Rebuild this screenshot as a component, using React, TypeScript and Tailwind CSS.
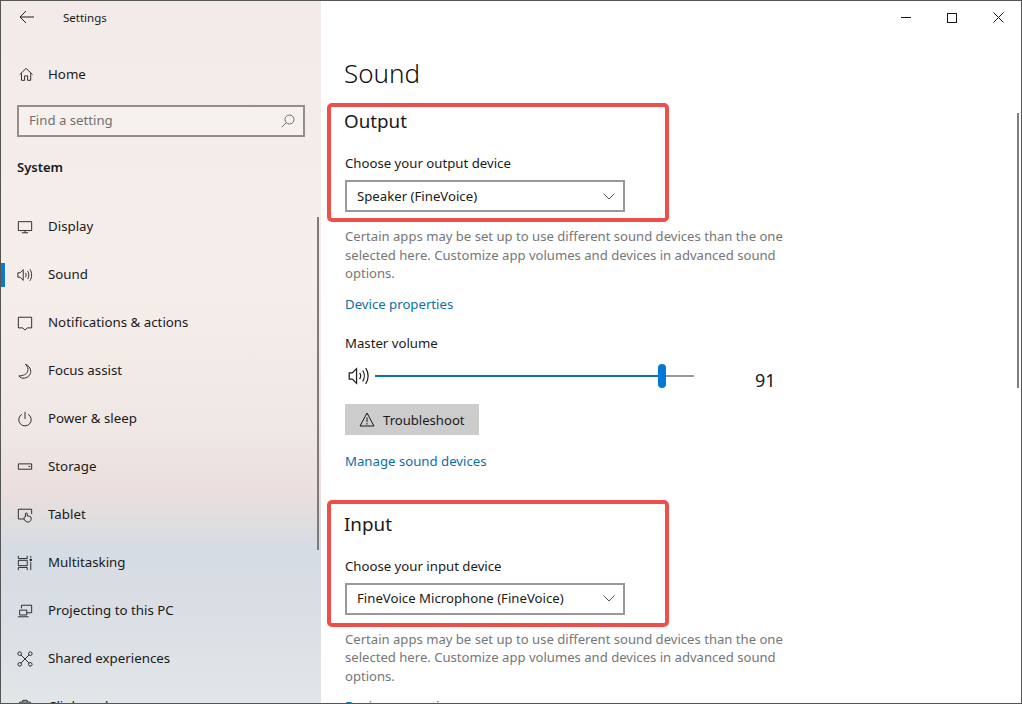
import type { ReactNode } from "react";

const ink = "#1a1a1a";

function Ico({ children, size = 18 }: { children: ReactNode; size?: number }) {
  return (
    <svg width={size} height={size} viewBox="0 0 18 18" fill="none" stroke={ink} strokeWidth="1" className="shrink-0">
      {children}
    </svg>
  );
}

const speaker = (
  <>
    <path d="M1 6.500h2.500L7 3v12l-3.500-3.500H1z" />
    <path d="M9.500 6.500c1 1.400 1 3.600 0 5M12 4.500c1.800 2.600 1.800 6.400 0 9M14.500 2.500c2.600 3.800 2.600 9.200 0 13" />
  </>
);

const navItems: { label: string; icon: ReactNode }[] = [
  { label: "Display", icon: <><path d="M1.500 3h15v10h-15z" /><path d="M9 13v2.500M5.500 15.500h7" /></> },
  { label: "Sound", icon: speaker },
  { label: "Notifications & actions", icon: <path d="M1.500 2.500h15v12h-5L9 17l-2.500-2.500h-5z" /> },
  { label: "Focus assist", icon: <path d="M9.500 1.500c2.500 2 3.500 5 2.500 8s-5 5-10 5c1.500 2 4 3 6.500 2.500 4-.5 7-4 7-7.500 0-3.500-2.500-7-6-8z" /> },
  { label: "Power & sleep", icon: <><path d="M5.500 3.700a7 7 0 1 0 7 0" /><path d="M9 1v8" /></> },
  { label: "Storage", icon: <><path d="M1.500 5.500h15v6h-15z" /><path d="M13 8.500h2" /></> },
  { label: "Tablet", icon: <><path d="M8 13.500H1.500v-11h15V8" /><path d="M9.500 16c-1-1-1.500-2-1.500-3.500s1-2 1.500-1.500V7.500c0-1.200 2-1.200 2 0V10l3 .5c1 .2 1.500 1 1.500 2 0 2-1 4.500-3.500 4.500-1.200 0-2-.2-2.500-1z" /></> },
  { label: "Multitasking", icon: <><path d="M1.500 1v3h10V1M1.500 17v-3h10v3M1.500 6h10v6h-10z" /><path d="M15.500 1v2M15.500 8v9" /><circle cx="15.500" cy="5.500" r="1" fill={ink} /></> },
  { label: "Projecting to this PC", icon: <><path d="M5 6V2.500h11.500V11H11" /><path d="M3 8h8v5.500H3zM1 15.500h12" /></> },
  { label: "Shared experiences", icon: <><circle cx="3" cy="3" r="2" /><circle cx="15" cy="3" r="2" /><circle cx="3" cy="15" r="2" /><circle cx="15" cy="15" r="2" /><path d="M4.500 4.500l9 9M13.500 4.500l-9 9" /></> },
  { label: "Clipboard", icon: <><path d="M3 3.500h12V17H3z" /><path d="M6.500 3.500V1.500h5v2" /></> },
];

function DeviceSelect({ value }: { value: string }) {
  return (
    <div className="mt-[7px] flex h-[32px] w-[280px] items-center justify-between border-2 border-[#999999] pl-[10px] pr-[8px] text-[13.2px] text-[#1a1a1a]">
      <span className="pt-[1px]">{value}</span>
      <svg width="12" height="7" viewBox="0 0 12 7" fill="none" stroke="#555555" strokeWidth="1">
        <path d="M.5.5 6 6l5.500-5.500" />
      </svg>
    </div>
  );
}

function Blurb() {
  return (
    <p className="mt-[15px] w-[450px] text-[13.1px] leading-[18.5px] text-[#767676]">
      Certain apps may be set up to use different sound devices than the one selected here. Customize app volumes and devices in advanced sound options.
    </p>
  );
}

export default function App() {
  return (
    <div className="relative flex h-[704px] w-[1022px] overflow-hidden border border-[#555555] bg-white font-['Noto_Sans','Open_Sans',sans-serif] text-[#1a1a1a]">
      {/* sidebar */}
      <aside className="relative h-full w-[320px] shrink-0 overflow-hidden bg-[linear-gradient(180deg,#f3ebe8_0%,#f5eeea_40%,#efe7e4_62%,#eadfdd_70%,#d6dce3_78%,#d9dfe4_88%,#e1e6e8_100%)]">
        <div className="flex h-[34px] items-center text-[11.5px]">
          <svg width="16" height="14" viewBox="0 0 16 14" fill="none" stroke={ink} strokeWidth="1" className="ml-[18px] mt-[-2px]">
            <path d="M7 1 1 7l6 6M1 7h14" />
          </svg>
          <span className="ml-[28px]">Settings</span>
        </div>
        <div className="mt-[16px] flex h-[48px] items-center gap-[13px] pl-[18px] text-[13.3px]">
          <Ico size={16}>
            <path d="M.8 8.500 8 1.500l7.200 7M2.800 7v8h3.500v-5h3.400v5h3.500V7" />
          </Ico>
          <span>Home</span>
        </div>
        <div className="mx-[16px] mt-[6px] flex h-[32px] items-center justify-between border-2 border-[#968d8b] bg-[#f7f1ee] pl-[10px] pr-[8px] text-[13.2px] text-[#707070]">
          <span>Find a setting</span>
          <svg width="14" height="14" viewBox="0 0 14 14" fill="none" stroke="#6f6f6f" strokeWidth="1">
            <circle cx="8.500" cy="5.500" r="4.500" />
            <path d="M5.200 8.800.8 13.200" />
          </svg>
        </div>
        <div className="mt-[21px] pl-[16px] text-[13px] font-semibold">System</div>
        <nav className="mt-[25px]">
          {navItems.map((item) => (
            <div key={item.label} className="relative flex h-[48px] items-center gap-[15px] pl-[16px] text-[13.3px]">
              {item.label === "Sound" && <span className="absolute left-0 top-[12px] h-[24px] w-[4px] bg-[#0f78c8]" />}
              <Ico size={16}>{item.icon}</Ico>
              <span>{item.label}</span>
            </div>
          ))}
        </nav>
        <span className="absolute right-[2px] top-[216px] h-[333px] w-[2px] bg-[#7f7b7a]" />
      </aside>

      {/* main column */}
      <main className="relative min-w-0 flex-1 overflow-hidden pl-[23px]">
        <h1 className="mt-[52px] text-[26px] font-light leading-[40px] text-[#111111]">Sound</h1>
        <h2 className="mt-[14px] text-[18.8px] leading-[28px]">Output</h2>
        <div className="mt-[18px] pl-[1px]">
          <div className="text-[13.2px] leading-[20px]">Choose your output device</div>
          <DeviceSelect value="Speaker (FineVoice)" />
          <Blurb />
          <div className="mt-[11px] text-[13.2px] leading-[20px] text-[#0b6fa8]">Device properties</div>
          <div className="mt-[19px] text-[13.2px] leading-[20px]">Master volume</div>
          <div className="mt-[9px] flex h-[28px] items-center">
            <span className="ml-[3px] flex">
              <Ico size={22}>{speaker}</Ico>
            </span>
            <div className="relative ml-[5px] flex h-[2px] w-[319px]">
              <span className="h-full w-[287px] bg-[#0f6fb0]" />
              <span className="h-full flex-1 bg-[#999999]" />
              <span className="absolute left-[283px] top-[-11px] h-[24px] w-[8px] rounded-full bg-[#0078d7]" />
            </div>
            <span className="ml-[61px] mt-[10px] text-[18px]">91</span>
          </div>
          <button className="mt-[14px] flex h-[31px] w-[134px] items-center gap-[8px] bg-[#cccccc] pl-[14px] text-[13.1px]">
            <svg width="16" height="15" viewBox="0 0 16 15" fill="none" stroke={ink} strokeWidth="1">
              <path d="M8 1 15 14H1z" />
              <path d="M8 5.500V10M8 11v1.500" />
            </svg>
            <span className="pt-[3px]">Troubleshoot</span>
          </button>
          <div className="mt-[16px] text-[13.2px] leading-[20px] text-[#0b6fa8]">Manage sound devices</div>
        </div>
        <h2 className="mt-[39px] text-[18.8px] leading-[28px]">Input</h2>
        <div className="mt-[18px] pl-[1px]">
          <div className="text-[13.2px] leading-[20px]">Choose your input device</div>
          <DeviceSelect value="FineVoice Microphone (FineVoice)" />
          <Blurb />
          <div className="mt-[11px] text-[13.2px] leading-[20px] text-[#0b6fa8]">Device properties</div>
        </div>
        <span className="absolute right-[2px] top-[112px] h-[275px] w-[2px] bg-[#7f7f7f]" />
      </main>

      {/* window controls */}
      <div className="absolute right-0 top-0 flex h-[33px] items-center">
        <div className="flex w-[46px] justify-center">
          <span className="h-px w-[10px] bg-[#1a1a1a]" />
        </div>
        <div className="flex w-[46px] justify-center">
          <span className="size-[10px] border border-[#1a1a1a]" />
        </div>
        <div className="flex w-[46px] justify-center">
          <svg width="11" height="11" viewBox="0 0 11 11" fill="none" stroke={ink} strokeWidth="1">
            <path d="M.5.5l10 10M10.500.5l-10 10" />
          </svg>
        </div>
      </div>

      {/* red annotation boxes */}
      <div className="absolute left-[326px] top-[102px] h-[119px] w-[342px] rounded-[5px] border-[4px] border-[#ef4f4a]" />
      <div className="absolute left-[326px] top-[499px] h-[127px] w-[342px] rounded-[5px] border-[4px] border-[#ef4f4a]" />
    </div>
  );
}
